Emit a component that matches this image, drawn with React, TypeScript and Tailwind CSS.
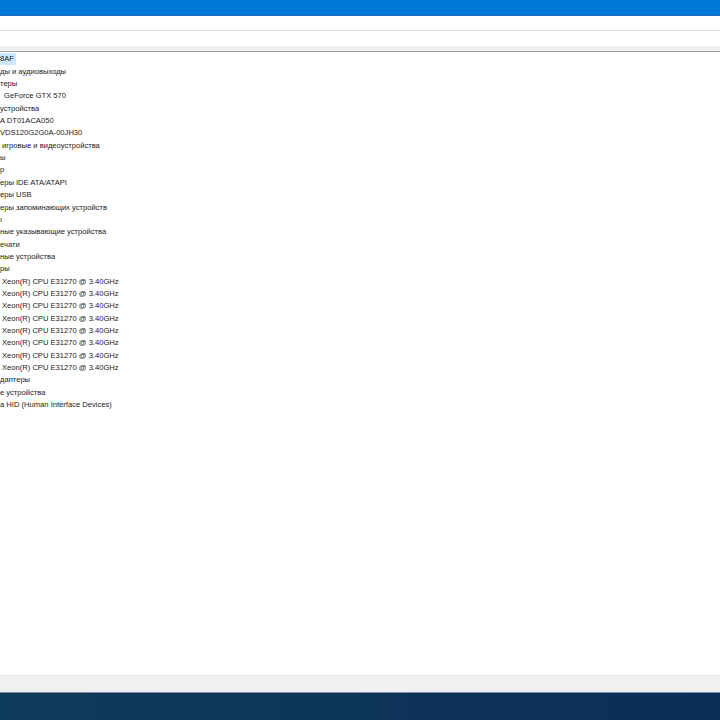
const rows: { text: string; pad?: number; selected?: boolean }[] = [
  { text: '8AF', selected: true },
  { text: 'ды и аудиовыходы' },
  { text: 'теры' },
  { text: 'GeForce GTX 570', pad: 4 },
  { text: 'устройства' },
  { text: 'A DT01ACA050' },
  { text: 'VDS120G2G0A-00JH30' },
  { text: 'игровые и видеоустройства', pad: 2 },
  { text: 'ы' },
  { text: 'р' },
  { text: 'еры IDE ATA/ATAPI' },
  { text: 'еры USB' },
  { text: 'еры запоминающих устройств' },
  { text: 'ı' },
  { text: 'ные указывающие устройства' },
  { text: 'ечати' },
  { text: 'ные устройства' },
  { text: 'ры' },
  ...Array.from({ length: 8 }, () => ({ text: 'Xeon(R) CPU E31270 @ 3.40GHz', pad: 2 })),
  { text: 'дaптеры' },
  { text: 'е устройства' },
  { text: 'a HID (Human Interface Devices)' },
]

export default function App() {
  return (
    <div
      className="flex h-[720px] w-[720px] flex-col overflow-hidden bg-white text-[#1a1a1a]"
      style={{ fontFamily: '"Liberation Sans", Arial, sans-serif' }}
    >
      {/* title bar */}
      <div className="h-[16px] shrink-0 border-b border-[#1b6cb0] bg-[#0078d7]" />
      {/* menu bar */}
      <div className="h-[15px] shrink-0 border-b border-[#dcdcdc] bg-white" />
      {/* toolbar */}
      <div className="h-[15px] shrink-0 bg-white" />
      <div className="h-[6px] shrink-0 border-b border-[#a0a0a0] bg-[#f0f0f0]" />

      {/* device tree */}
      <div className="flex flex-1 flex-col pt-[1px]">
        {rows.map((r, i) => (
          <div key={i} className="flex h-[12.35px] items-center text-[7.6px] leading-none whitespace-nowrap">
            <span
              className={r.selected ? 'bg-[#cce8ff] py-[2px] pr-[2px]' : ''}
              style={{ paddingLeft: r.pad ?? 0 }}
            >
              {r.text}
            </span>
          </div>
        ))}
      </div>

      {/* status bar */}
      <div className="h-[17px] shrink-0 border-t border-[#e2e2e2] bg-[#f0f0f0]" />
      {/* taskbar */}
      <div className="h-[28px] shrink-0 border-t border-[#7a8ea8] bg-gradient-to-r from-[#0f3b5a] to-[#0b2e56]" />
    </div>
  )
}
